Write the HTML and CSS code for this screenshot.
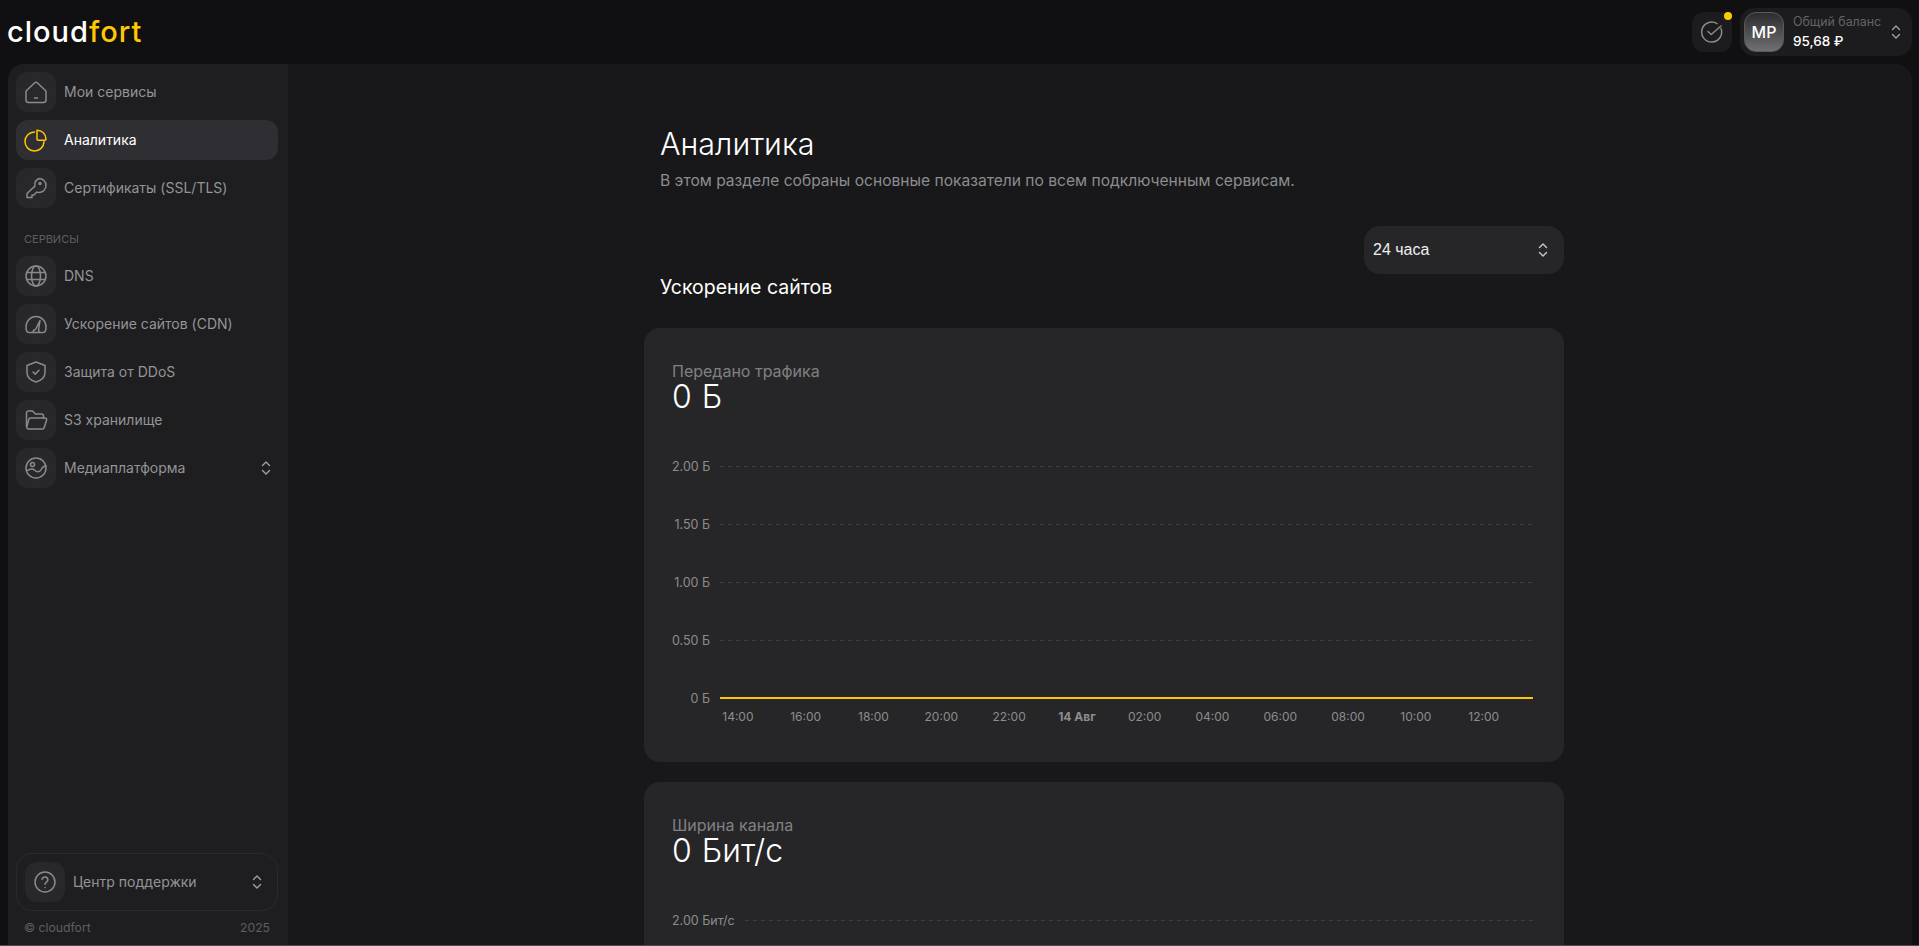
FILE: index.html
```html
<!DOCTYPE html>
<html lang="ru">
<head>
<meta charset="utf-8">
<title>Аналитика</title>
<link rel="stylesheet" href="styles.css">
</head>
<body>
<svg class="defs" width="0" height="0" aria-hidden="true">
  <symbol id="updown" viewBox="0 0 10 16"><path d="M1.500 5.500 5 2l3.500 3.500M1.500 10.500 5 14l3.500-3.500" fill="none" stroke="currentColor" stroke-width="1.400" stroke-linecap="round" stroke-linejoin="round"/></symbol>
</svg>
<header class="topbar">
  <div class="logo">cloud<span class="logo-accent">fort</span></div>
  <div class="top-actions">
    <div class="task-btn">
      <svg class="ico" viewBox="0 0 24 24"><path d="M21 8.500A10 10 0 1 1 17 3.600"/><path d="M8 11.500l3.200 3L21 6"/></svg>
      <span class="task-dot"></span>
    </div>
    <div class="balance">
      <div class="avatar">МР</div>
      <div class="balance-text">
        <div class="balance-label">Общий баланс</div>
        <div class="balance-value">95,68 ₽</div>
      </div>
      <svg class="updown"><use href="#updown"/></svg>
    </div>
  </div>
</header>
<div class="shell">
  <aside class="sidebar">
    <nav class="nav">
      <a class="nav-item"><span class="nav-icon"><svg class="ico" viewBox="0 0 24 24"><path d="M2.500 10.500 10.500 3a2.200 2.200 0 0 1 3 0l8 7.500a1.500 1.500 0 0 1 .5 1.100V20a2.500 2.500 0 0 1-2.500 2.500h-15A2.500 2.500 0 0 1 2 20v-8.400a1.500 1.500 0 0 1 .5-1.100z"/><path d="M10.500 18h3"/></svg></span><span class="nav-label">Мои сервисы</span></a>
      <a class="nav-item active"><span class="nav-icon"><svg class="ico" viewBox="0 0 24 24"><path d="M10.500 4a9.500 9.500 0 1 0 9.500 9.800"/><path d="M13 2.200a9 9 0 0 1 9 9c0 .6-.4 1-1 1h-7a1 1 0 0 1-1-1z"/></svg></span><span class="nav-label">Аналитика</span></a>
      <a class="nav-item"><span class="nav-icon"><svg class="ico" viewBox="0 0 24 24"><path d="M15 2.500a7 7 0 0 1 0 14c-.8 0-1.600-.1-2.300-.4L10 19H8v2.500H3v-4l7.900-7.400A7 7 0 0 1 15 2.500z"/><circle cx="16" cy="7.500" r="1"/></svg></span><span class="nav-label">Сертификаты (SSL/TLS)</span></a>
      <div class="nav-heading">СЕРВИСЫ</div>
      <a class="nav-item"><span class="nav-icon"><svg class="ico" viewBox="0 0 24 24"><circle cx="12" cy="12" r="10"/><ellipse cx="12" cy="12" rx="4.500" ry="10"/><path d="M2.800 8.500h18.400M2.800 15.500h18.400"/></svg></span><span class="nav-label">DNS</span></a>
      <a class="nav-item"><span class="nav-icon"><svg class="ico" viewBox="0 0 24 24"><path d="M5 20.500h14c2 0 3-2.500 3-5.500a10 10.500 0 0 0-20 0c0 3 1 5.500 3 5.500z"/><path d="M9 20.300a3 3 0 0 1 2.500-2.800L16 8.500l-1.500 9.500a3 3 0 0 1 .5 2.300"/></svg></span><span class="nav-label">Ускорение сайтов (CDN)</span></a>
      <a class="nav-item"><span class="nav-icon"><svg class="ico" viewBox="0 0 24 24"><path d="M12 2l9 3.500v7c0 5-4 8-9 9.500-5-1.500-9-4.500-9-9.500v-7z"/><path d="M9 12l2.200 2.100 3.800-3.800"/></svg></span><span class="nav-label">Защита от DDoS</span></a>
      <a class="nav-item"><span class="nav-icon"><svg class="ico" viewBox="0 0 24 24"><path d="M2.500 18.500V5a2 2 0 0 1 2-2h4l3 3h6a2 2 0 0 1 2 2v2"/><path d="M6.200 10h15a1.500 1.500 0 0 1 1.400 2l-2.400 7.500a2 2 0 0 1-1.900 1.500H4.500A1.800 1.800 0 0 1 2.800 18.700l2-7.500A1.600 1.600 0 0 1 6.200 10z"/></svg></span><span class="nav-label">S3 хранилище</span></a>
      <a class="nav-item"><span class="nav-icon"><svg class="ico" viewBox="0 0 24 24"><circle cx="12" cy="12" r="10"/><circle cx="8.500" cy="8.500" r="2"/><path d="M2.500 15c3-2 6-3 8-1s5 3 7-1c1-2 3-3 4.500-3"/></svg></span><span class="nav-label grow">Медиаплатформа</span><svg class="updown"><use href="#updown"/></svg></a>
    </nav>
    <div class="side-foot">
      <a class="support">
        <span class="nav-icon"><svg class="ico" viewBox="0 0 24 24"><circle cx="12" cy="12" r="10"/><path d="M9 9.200a3 3 0 0 1 5.900.6c0 2-2.900 2.500-2.900 4.400"/><path d="M12 17.500h.01"/></svg></span>
        <span class="nav-label grow">Центр поддержки</span>
        <svg class="updown"><use href="#updown"/></svg>
      </a>
      <div class="copy"><span>© cloudfort</span><span>2025</span></div>
    </div>
  </aside>
  <main class="main">
    <div class="content">
      <div class="page-head">
        <h1 class="page-title">Аналитика</h1>
        <p class="page-sub">В этом разделе собраны основные показатели по всем подключенным сервисам.</p>
      </div>
      <div class="filter-row">
        <button class="select"><span>24 часа</span><svg class="updown"><use href="#updown"/></svg></button>
      </div>
      <h2 class="section-title">Ускорение сайтов</h2>
      <section class="card">
        <div class="card-label">Передано трафика</div>
        <div class="card-value">0 Б</div>
        <div class="chart">
          <div class="grid-row"><span class="y">2.00 Б</span><i class="dash"></i></div>
          <div class="grid-row"><span class="y">1.50 Б</span><i class="dash"></i></div>
          <div class="grid-row"><span class="y">1.00 Б</span><i class="dash"></i></div>
          <div class="grid-row"><span class="y">0.50 Б</span><i class="dash"></i></div>
          <div class="grid-row"><span class="y">0 Б</span><i class="line"></i></div>
          <div class="x-axis">
            <span>14:00</span><span>16:00</span><span>18:00</span><span>20:00</span><span>22:00</span><span class="strong">14 Авг</span><span>02:00</span><span>04:00</span><span>06:00</span><span>08:00</span><span>10:00</span><span>12:00</span>
          </div>
        </div>
      </section>
      <section class="card">
        <div class="card-label">Ширина канала</div>
        <div class="card-value">0 Бит/с</div>
        <div class="chart">
          <div class="grid-row"><span class="y">2.00 Бит/с</span><i class="dash"></i></div>
        </div>
      </section>
    </div>
  </main>
</div>
</body>
</html>
```
FILE: styles.css
```css
* { box-sizing: border-box; }
html, body { height: 100%; margin: 0; overflow: hidden; }
body { background: #101012; font-family: Inter, "Noto Sans", sans-serif; color: #fff; display: flex; flex-direction: column; border-bottom: 1px solid #4c4c4e; }
.defs { position: absolute; }
.ico { width: 24px; height: 24px; fill: none; stroke: currentColor; stroke-width: 1.5; stroke-linecap: round; stroke-linejoin: round; }
.updown { width: 10px; height: 16px; flex: none; color: #a0a0a3; }

.topbar { height: 64px; flex: none; display: flex; align-items: center; justify-content: space-between; padding: 0 7px 0 8px; }
.logo { font-size: 29px; font-weight: 500; letter-spacing: 1px; margin-top: -2px; margin-left: -1px; }
.logo-accent { color: #ffc800; }
.top-actions { display: flex; align-items: center; gap: 8px; }
.task-btn { position: relative; width: 40px; height: 40px; border-radius: 12px; background: #1c1c1e; display: flex; align-items: center; justify-content: center; color: #8a8a8d; }
.task-dot { position: absolute; top: 0; right: 0; width: 8px; height: 8px; border-radius: 50%; background: #ffc800; }
.balance { width: 172px; height: 48px; border-radius: 14px; background: #1c1c1e; display: flex; align-items: center; padding: 4px 11px 4px 4px; gap: 9px; }
.avatar { width: 40px; height: 40px; flex: none; border-radius: 12px; border: 1px solid #59595c; background: linear-gradient(#2d2d2f, #707072); display: flex; align-items: center; justify-content: center; font-size: 16px; font-weight: 500; }
.balance-text { flex: 1; }
.balance-label { font-size: 12.400px; line-height: 16px; color: #636366; }
.balance-value { font-size: 13.500px; line-height: 20px; font-weight: 500; margin-top: 1px; }

.shell { flex: 1; min-height: 0; display: flex; margin: 0 7px 0 8px; border-radius: 16px 16px 0 0; overflow: hidden; background: #18181a; }
.sidebar { width: 280px; flex: none; background: #1e1e20; padding: 8px 10px 8px 8px; display: flex; flex-direction: column; justify-content: space-between; }
.nav { display: flex; flex-direction: column; gap: 8px; }
.nav-item { height: 40px; display: flex; align-items: center; gap: 8px; border-radius: 12px; font-size: 14px; color: #949497; padding-right: 7px; }
.nav-item.active { background: #2f2f33; color: #fff; }
.nav-item.active .nav-icon { background: none; color: #ffc800; }
.nav-icon { width: 40px; height: 40px; flex: none; border-radius: 12px; background: #28282a; display: flex; align-items: center; justify-content: center; color: #8a8a8d; }
.nav-label { margin-bottom: 2px; }
.grow { flex: 1; }
.nav-heading { height: 32px; font-size: 11px; line-height: 16px; color: #5e5e61; padding: 15px 8px 1px; }
.side-foot { display: flex; flex-direction: column; gap: 9px; }
.support { height: 58px; border: 1px solid #2a2a2c; border-radius: 16px; padding: 0 15px 0 8px; display: flex; align-items: center; gap: 8px; font-size: 14px; color: #949497; }
.copy { display: flex; justify-content: space-between; font-size: 12.200px; line-height: 16px; color: #5e5e61; padding: 0 8px; margin-bottom: 1px; }

.main { flex: 1; min-width: 0; overflow: hidden; }
.content { width: 920px; margin-left: 356px; padding-top: 64px; }
.page-head { padding-left: 16px; }
.page-title { margin: 0; font-size: 30.500px; line-height: 32px; font-weight: 300; }
.page-sub { margin: 11px 0 0; font-size: 15.600px; line-height: 20px; color: #8c8c8f; }
.filter-row { display: flex; justify-content: flex-end; margin-top: 35px; }
.select { width: 200px; height: 48px; border: 0; border-radius: 16px; background: #262628; color: #eee; font-family: "Liberation Sans", Arial, sans-serif; font-size: 16px; display: flex; align-items: center; justify-content: space-between; padding: 0 16px 0 9px; }
.select .updown { color: #c8c8ca; }
.section-title { margin: -1px 0 0 16px; font-size: 19.500px; line-height: 28px; font-weight: 400; }
.card { margin-top: 20px; background: #262628; border-radius: 16px; padding: 34px 31px 0 28px; height: 434px; }
.section-title + .card { margin-top: 27px; }
.card:last-child { height: 300px; }
.card-label { font-size: 16px; line-height: 18px; color: #808083; }
.card-value { font-size: 32px; line-height: 34px; font-weight: 300; word-spacing: 1px; }
.chart { margin-top: 23px; }
.grid-row { height: 58px; display: flex; align-items: center; gap: 10px; }
.y { font-size: 12.500px; color: #8c8c8f; flex: none; min-width: 38px; text-align: right; }
.dash { flex: 1; height: 1px; background: repeating-linear-gradient(90deg, #3e3e40 0 4px, transparent 4px 8px); }
.line { flex: 1; height: 2px; background: #ffc800; }
.x-axis { display: flex; margin: -18px 0 0 32px; font-size: 12px; line-height: 16px; color: #8c8c8f; }
.x-axis span { width: 67.800px; text-align: center; }
.x-axis .strong { font-weight: 700; }
```
